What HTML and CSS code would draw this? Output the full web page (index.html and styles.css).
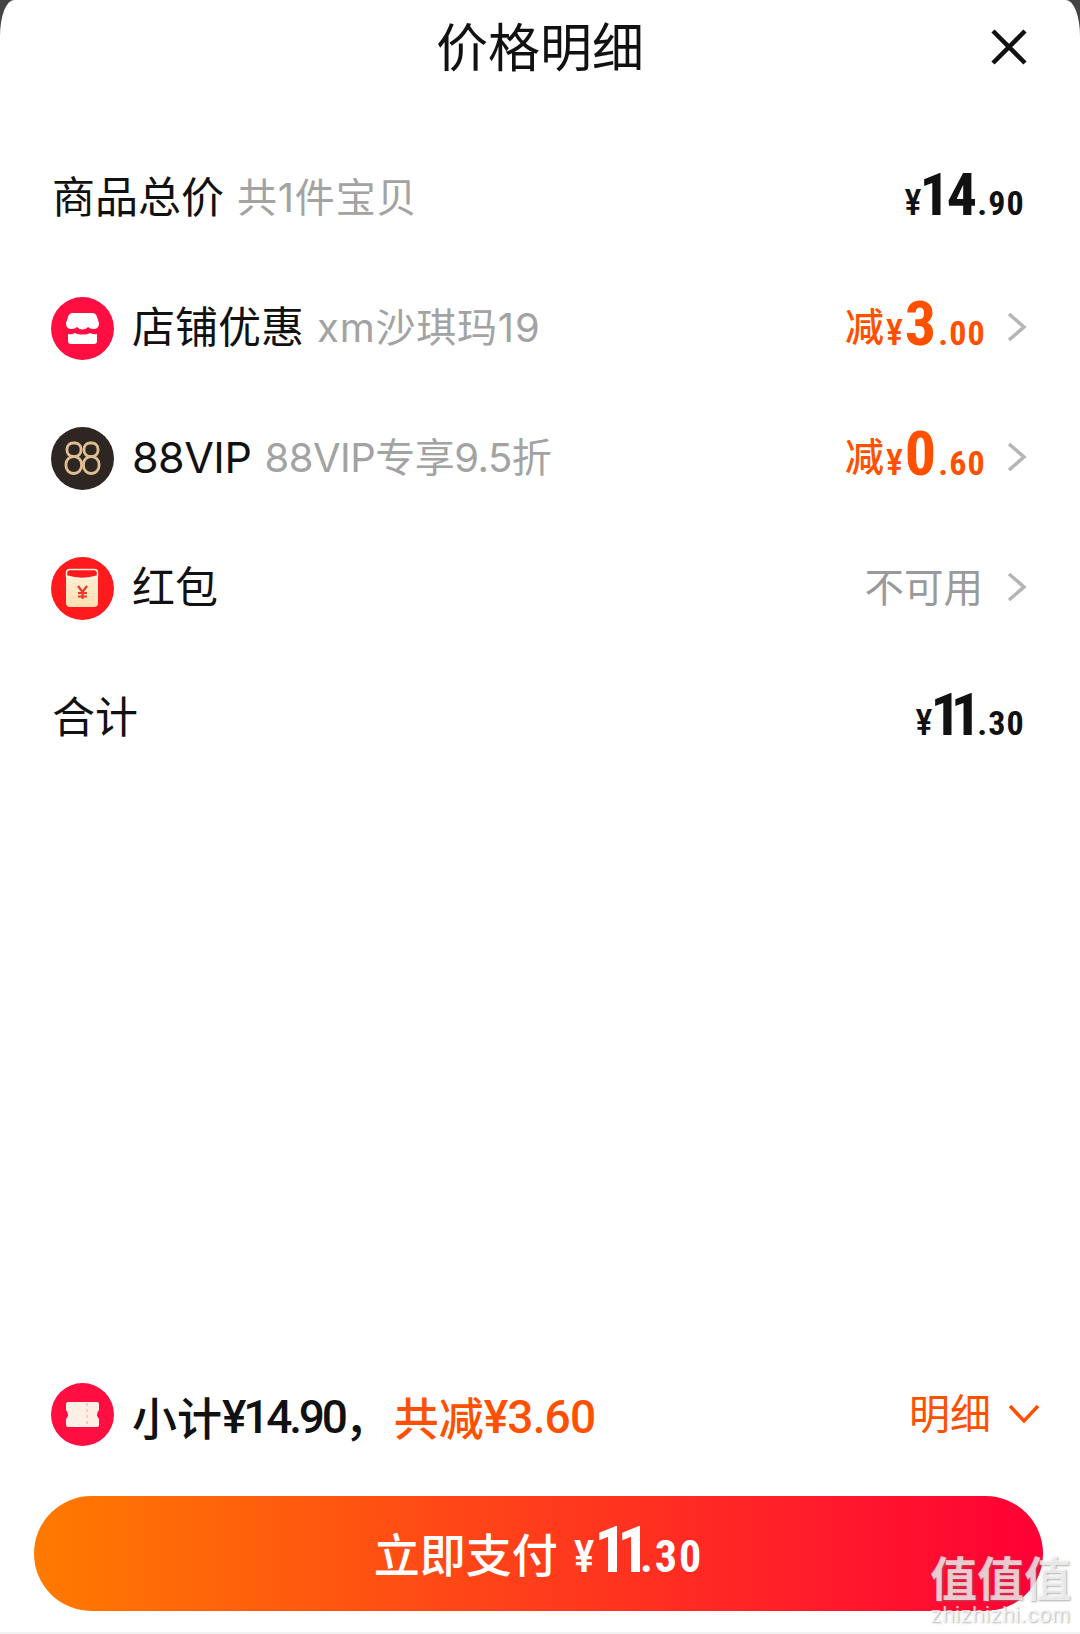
FILE: index.html
```html
<!DOCTYPE html>
<html lang="zh">
<head>
<meta charset="utf-8">
<title>价格明细</title>
<link rel="stylesheet" href="styles.css">
</head>
<body>
<main class="sheet">
  <header class="header">
    <h1 class="title">价格明细</h1>
    <svg class="close" viewBox="0 0 36 36"><path d="M2 2L34 34M34 2L2 34"/></svg>
  </header>
  <section class="list">
    <div class="row plain">
      <div class="left"><span class="label">商品总价</span><span class="note">共1件宝贝</span></div>
      <div class="price"><span class="yen">¥</span><span class="big mid">14</span><span class="small">.90</span></div>
    </div>
    <div class="row">
      <div class="left">
        <svg class="icon" viewBox="0 0 63 63"><circle cx="31.5" cy="31.5" r="31.5" fill="#ff0f41"/><path d="M22 16H41Q45 16 46 20L48 26Q48 32 42.500 32Q39 32 37 30Q34.500 32.500 31.500 32.500Q28.500 32.500 26 30Q24 32 20.500 32Q15 32 15 26L17 20Q18 16 22 16Z" fill="#fff"/><path d="M17 37Q20 38 24 36Q27.500 38 31.500 37.500Q35.500 38 39 36Q43 38 46 37V44Q46 47 43 47H20Q17 47 17 44Z" fill="#fff"/></svg>
        <span class="label">店铺优惠</span><span class="note">xm沙琪玛19</span>
      </div>
      <div class="right">
        <span class="cut">减</span>
        <div class="price accent"><span class="yen">¥</span><span class="big">3</span><span class="small">.00</span></div>
        <svg class="chevron" viewBox="0 0 20 30"><path d="M2 2L17 15L2 28"/></svg>
      </div>
    </div>
    <div class="row">
      <div class="left">
        <svg class="icon" viewBox="0 0 63 63"><circle cx="31.5" cy="31.5" r="31.5" fill="#2e2623"/><g fill="none" stroke="#e0bd92" stroke-width="2.800"><rect x="16" y="16" width="14" height="13.500" rx="6"/><rect x="15" y="29.500" width="15.500" height="17" rx="7.500"/><rect x="33" y="16" width="14" height="13.500" rx="6"/><rect x="32.500" y="29.500" width="15.500" height="17" rx="7.500"/></g></svg>
        <span class="label vip">88VIP</span><span class="note vip">88VIP专享9.5折</span>
      </div>
      <div class="right">
        <span class="cut">减</span>
        <div class="price accent"><span class="yen">¥</span><span class="big">0</span><span class="small">.60</span></div>
        <svg class="chevron" viewBox="0 0 20 30"><path d="M2 2L17 15L2 28"/></svg>
      </div>
    </div>
    <div class="row">
      <div class="left">
        <svg class="icon" viewBox="0 0 63 63"><defs><linearGradient id="packet" x1="0" y1="0" x2="0" y2="1"><stop offset="0" stop-color="#fff3dc"/><stop offset="1" stop-color="#ffdfb0"/></linearGradient></defs><circle cx="31.5" cy="31.5" r="31.5" fill="#ff1a1e"/><rect x="15" y="12" width="32" height="38" rx="4" fill="url(#packet)"/><path d="M15.500 16q0-3.500 3.500-3.500h24q3.500 0 3.500 3.500v3q-15 5-31 0z" fill="#ff1a1e" stroke="#fff3e0" stroke-width="1.500"/><path d="M27 29l4.500 6 4.500-6M31.500 35v7M27 36h9M27 39.500h9" fill="none" stroke="#e8392b" stroke-width="2.200"/></svg>
        <span class="label">红包</span>
      </div>
      <div class="right">
        <span class="unavail">不可用</span>
        <svg class="chevron" viewBox="0 0 20 30"><path d="M2 2L17 15L2 28"/></svg>
      </div>
    </div>
    <div class="row plain">
      <div class="left"><span class="label">合计</span></div>
      <div class="price"><span class="yen">¥</span><span class="big one">11</span><span class="small">.30</span></div>
    </div>
  </section>
  <footer class="footer">
    <div class="summary">
      <div class="left">
        <svg class="icon" viewBox="0 0 63 63"><circle cx="31.500" cy="31.500" r="31.500" fill="#ff0f41"/><path d="M17 19h29q2 0 2 2v6q-4 4.500 0 9v6q0 2-2 2H17q-2 0-2-2v-6q4-4.500 0-9v-6q0-2 2-2z" fill="#fdeee6"/><path d="M36 20v24" stroke="#f3cfc0" stroke-width="2" stroke-dasharray="3 3"/></svg>
        <span class="sum-cjk">小计</span><span class="sum-num">¥14.90</span><span class="sum-cjk">，</span>
        <span class="sum-cut"><span class="sum-cjk">共减</span><span class="sum-num wide">¥3.60</span></span>
      </div>
      <div class="detail">
        <span class="detail-text">明细</span>
        <svg class="chevron-down" viewBox="0 0 32 22"><path d="M2 3L16 18L30 3"/></svg>
      </div>
    </div>
    <button class="pay"><span class="pay-label">立即支付</span><span class="pay-yen">¥</span><span class="pay-big">11</span><span class="pay-small">.30</span></button>
  </footer>
  <div class="watermark"><span class="wm-mark">值值值</span><span class="wm-url">zhizhizhi.com</span></div>
</main>
</body>
</html>
```
FILE: styles.css
```css
* { box-sizing: border-box; }
html, body { margin: 0; padding: 0; }
body {
  width: 1080px;
  height: 1634px;
  background: #444;
  overflow: hidden;
  font-family: "Inter", "Noto Sans CJK SC", sans-serif;
}
.sheet {
  position: relative;
  height: 1634px;
  background: #fff;
  border-radius: 14px 14px 0 0 / 36px 36px 0 0;
  display: flex;
  flex-direction: column;
  border-bottom: 2px solid #f2f2f2;
}
.header {
  height: 90px;
  flex: none;
  display: flex;
  align-items: center;
  justify-content: center;
  position: relative;
}
.title {
  margin: 0;
  font-family: "Noto Sans CJK SC", sans-serif;
  font-size: 52px;
  font-weight: 400;
  line-height: 1;
  color: #111;
}
.close {
  position: absolute;
  right: 53px;
  top: 29px;
  width: 36px;
  height: 36px;
}
.close path { fill: none; stroke: #111; stroke-width: 4.500; }
.list { padding-top: 43px; flex: none; }
.row {
  height: 130px;
  padding: 0 53px 0 51px;
  display: flex;
  align-items: center;
  justify-content: space-between;
}
.row.plain { padding-left: 52px; padding-right: 55px; }
.left { display: flex; align-items: center; }
.right { display: flex; align-items: center; }
.icon { width: 63px; height: 63px; flex: none; margin-right: 18px; }
.label { font-size: 43px; line-height: 1; color: #111; padding-bottom: 1px; }
.label.vip { letter-spacing: -.5px; }
.note { font-size: 40px; line-height: 1; color: #a3a3a3; margin-left: 13px; padding-bottom: 1px; letter-spacing: .8px; }
.note.vip { letter-spacing: -.5px; }
.price {
  display: flex;
  align-items: baseline;
  color: #111;
  font-family: "Roboto Condensed", "Roboto", sans-serif;
  font-stretch: 75%;
  font-weight: 700;
  line-height: 1;
  padding-bottom: 6px;
}
.price.accent { color: #ff5000; margin-right: -3px; padding-bottom: 8px; }
.yen { font-size: 36px; font-weight: 500; margin-right: -2px; }
.big { font-size: 60px; }
.accent .yen { margin-right: 1px; }
.accent .big { font-size: 62px; margin-left: 1px; }
.accent .small { margin-left: 2px; }
.big.mid { letter-spacing: -3px; margin-right: 3px; }
.big.one { letter-spacing: -10px; margin-right: 6px; }
.small { font-size: 34px; letter-spacing: 1.200px; }
.cut { font-family: "Noto Sans CJK SC", sans-serif; font-size: 39px; font-weight: 500; color: #ff5000; line-height: 1; padding-bottom: 7px; margin-right: 2px; }
.chevron { width: 20px; height: 30px; margin-left: 24px; margin-bottom: 3px; }
.chevron path { fill: none; stroke: #b5b5b5; stroke-width: 3.500; }
.unavail { font-family: "Noto Sans CJK SC", sans-serif; font-size: 39.500px; line-height: 1; color: #9a9a9a; padding-bottom: 6px; }
.footer { margin-top: auto; flex: none; padding-bottom: 21px; }
.summary {
  height: 92px;
  margin-bottom: 36px;
  padding: 0 40px 0 51px;
  display: flex;
  align-items: center;
  justify-content: space-between;
}
.sum-cjk { font-family: "Noto Sans CJK SC", sans-serif; font-size: 45px; line-height: 1; font-weight: 500; color: #111; padding-top: 5px; }
.sum-num { font-family: "Roboto", sans-serif; font-size: 46px; line-height: 1; font-weight: 500; letter-spacing: -3.200px; color: #111; padding-top: 5px; }
.sum-num.wide { letter-spacing: -.8px; color: #ff5000; }
.sum-cut { display: flex; align-items: center; margin-left: 4px; }
.sum-cut .sum-cjk { color: #ff5000; }
.detail {
  display: flex;
  align-items: center;
  color: #ff5000;
  font-family: "Noto Sans CJK SC", sans-serif;
  font-size: 41px;
  line-height: 1;
  padding-bottom: 5px;
}
.chevron-down { width: 32px; height: 22px; margin-left: 17px; margin-top: 4px; }
.chevron-down path { fill: none; stroke: #ff5000; stroke-width: 3.500; }
.pay {
  display: flex;
  align-items: baseline;
  justify-content: center;
  width: 1009px;
  height: 115px;
  margin: 0 0 0 34px;
  padding: 22px 0 0;
  border: 0;
  border-radius: 58px;
  color: #fff;
  background: linear-gradient(90deg, #ff7a00, #ff0036);
  line-height: 1;
  font-family: "Roboto Condensed", "Roboto", sans-serif;
  font-stretch: 75%;
  font-weight: 700;
}
.pay-label { font-family: "Noto Sans CJK SC", sans-serif; font-stretch: normal; font-size: 46px; font-weight: 500; margin-right: 16px; }
.pay-yen { font-size: 44px; font-weight: 500; }
.pay-big { font-size: 65px; letter-spacing: -10px; margin-right: 0; }
.pay-small { font-size: 44px; letter-spacing: 2px; }
.watermark {
  position: absolute;
  right: 9px;
  bottom: 6px;
  display: flex;
  flex-direction: column;
  align-items: center;
  color: rgba(255, 255, 255, 0.72);
  text-shadow: 1px 1px 2px rgba(120, 120, 120, 0.6);
}
.wm-mark { font-family: "Noto Sans CJK SC", sans-serif; font-size: 47px; line-height: 1.22; font-weight: 700; }
.wm-url { font-family: "Liberation Sans", sans-serif; font-size: 22px; line-height: 1; letter-spacing: .6px; }
```
